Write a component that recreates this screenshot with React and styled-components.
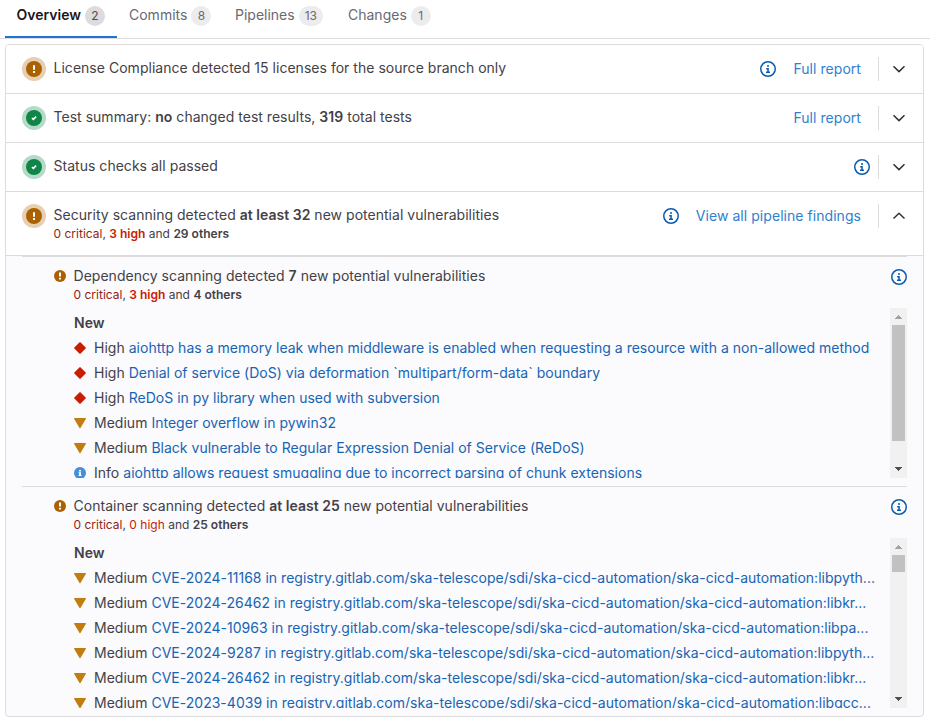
import React from "react";
import styled, { createGlobalStyle } from "styled-components";

const Global = createGlobalStyle`
  * { box-sizing: border-box; }
  body { margin: 0; background: #fff; overflow: hidden; }
`;

const Page = styled.div`
  width: 930px;
  height: 722px;
  display: flex;
  flex-direction: column;
  font-family: Inter, "Noto Sans", sans-serif;
  font-size: 14px;
  line-height: 20px;
  color: #434147;
`;

const Tabs = styled.nav`
  display: flex;
  height: 39px;
  flex: none;
  padding-left: 5px;
  border-bottom: 1px solid #dcdcde;
`;

const Tab = styled.a`
  display: flex;
  align-items: flex-start;
  gap: 4px;
  width: ${(p) => p.$width}px;
  height: 38px;
  padding: 6px 0 0 ${(p) => (p.$active ? 11.5 : 12)}px;
  white-space: nowrap;
  color: ${(p) => (p.$active ? "#18171d" : "#6a6970")};
  font-weight: ${(p) => (p.$active ? 600 : 400)};
  box-shadow: ${(p) => (p.$active ? "inset 0 -2px 0 #1f75cb" : "none")};
`;

const TabLabel = styled.span`
  margin-top: -1px;
`;

const Badge = styled.span`
  min-width: 20px;
  height: 20px;
  padding: 0 6px;
  border-radius: 10px;
  text-align: center;
  font-size: 12px;
  font-weight: 400;
  color: ${(p) => (p.$active ? "#4c4b51" : "#6a6970")};
  background: ${(p) => (p.$active ? "#dcdcde" : "#ececef")};
`;

const Panel = styled.main`
  width: 919px;
  height: 673px;
  margin: 5px 0 0 5px;
  border: 1px solid #dcdcde;
  border-radius: 4px;
  overflow: hidden;
  background: #fbfafd;
`;

const Row = styled.section`
  display: flex;
  align-items: flex-start;
  height: ${(p) => p.$height || 49}px;
  padding: 12px 12px 0 16px;
  background: #fff;
  border-bottom: 1px solid #dcdcde;
`;

const Halo = styled.span`
  display: flex;
  flex: none;
  width: 24px;
  height: 24px;
  padding: 4px;
  margin-right: 7.5px;
  border-radius: 50%;
  background: ${(p) => p.$color};
`;

const Body = styled.div`
  flex: 1;
  min-width: 0;
  white-space: nowrap;
  margin-top: ${(p) => p.$top || 0}px;
`;

const Title = styled.div`
  letter-spacing: 0.025px;
`;

const Counts = styled.div`
  margin-top: 1px;
  font-size: 12px;
  line-height: 16px;
  letter-spacing: 0.01px;
`;

const Strong = styled.strong`
  font-weight: 600;
`;

const Critical = styled.span`
  color: #951f0e;
`;

const High = styled.span`
  color: #c91c00;
  font-weight: ${(p) => (p.$bold ? 600 : 400)};
`;

const Actions = styled.div`
  display: flex;
  align-items: center;
  height: 24px;
`;

const ReportLink = styled.a`
  margin: 0 17px 0 17px;
  color: #2f80d0;
  white-space: nowrap;
  letter-spacing: 0.05px;
`;

const Toggle = styled.span`
  display: flex;
  align-items: center;
  justify-content: flex-end;
  width: 33px;
  height: 24px;
  padding-right: 4px;
  margin-left: ${(p) => p.$gap || 0}px;
  border-left: 1px solid #dcdcde;
`;

const Section = styled.section`
  display: flex;
  flex-direction: column;
  height: 230px;
  margin: 0 16px;
  border-top: 1px solid #dcdcde;
`;

const SectionHead = styled.header`
  display: flex;
  align-items: flex-start;
  height: 51px;
  padding: 9px 0 0 32px;
`;

const HeadIcon = styled.span`
  display: flex;
  margin: 4px 7.5px 0 0;
`;

const HeadInfo = styled.span`
  display: flex;
  margin-top: 3px;
`;

const Scroller = styled.div`
  display: flex;
  height: 170px;
  overflow: hidden;
`;

const List = styled.div`
  flex: 1;
  min-width: 0;
  padding: 5px 0 0 52px;
`;

const ListTitle = styled.div`
  height: 22px;
  font-weight: 600;
`;

const Finding = styled.div`
  display: flex;
  align-items: center;
  height: 25px;
  white-space: pre;
  letter-spacing: 0.018px;

  svg {
    flex: none;
    margin-right: 8px;
  }
`;

const FindingLink = styled.a`
  color: #1864b2;
`;

const Track = styled.div`
  display: flex;
  flex-direction: column;
  align-items: center;
  width: 17px;
  height: 170px;
  background: #f1f1f1;
`;

const Thumb = styled.div`
  width: 13px;
  height: ${(p) => p.$height}px;
  margin-bottom: auto;
  background: #c1c1c1;
`;

const AlertIcon = () => (
  <svg width="16" height="16" viewBox="0 0 16 16">
    <circle cx="8" cy="8" r="8" fill="#ab6100" />
    <path d="M7 4.3h2v4.5H7zM7 10h2v2H7z" fill="#fff" />
  </svg>
);

const SmallAlertIcon = () => (
  <svg width="12" height="12" viewBox="0 0 12 12">
    <circle cx="6" cy="6" r="6" fill="#ab6100" />
    <path d="M5 2.4h2v4.1H5zM5 7.7h2v1.9H5z" fill="#fff" />
  </svg>
);

const CheckIcon = () => (
  <svg width="16" height="16" viewBox="0 0 16 16">
    <circle cx="8" cy="8" r="8" fill="#108548" />
    <path d="M5.9 8.2 7.4 9.4 10.1 6.6" fill="none" stroke="#fff" strokeWidth="1.6" />
  </svg>
);

const InfoIcon = () => (
  <svg width="16" height="16" viewBox="0 0 16 16" fill="#0b5cad">
    <circle cx="8" cy="8" r="7.25" fill="none" stroke="#0b5cad" strokeWidth="1.5" />
    <circle cx="8" cy="4.9" r="1" />
    <path d="M6.2 7h2.6v3.6H10V12H6v-1.4h1.3V8.4H6.2z" />
  </svg>
);

const Chevron = ({ up }) => (
  <svg width="16" height="16" viewBox="0 0 16 16">
    <path d={up ? "M2.5 10.5 8 5.2l5.5 5.3" : "M2.5 5.3 8 10.6l5.5-5.3"} fill="none" stroke="#333238" strokeWidth="1.5" strokeLinejoin="round" />
  </svg>
);

const SeverityIcon = ({ level }) => (
  <svg width="12" height="12" viewBox="0 0 12 12">
    {level === "High" && <path d="M5.4.4a.85.85 0 0 1 1.2 0l5 5a.85.85 0 0 1 0 1.2l-5 5a.85.85 0 0 1-1.2 0l-5-5a.85.85 0 0 1 0-1.2z" fill="#c91c00" />}
    {level === "Medium" && <path d="M.8 1h10.4a.7.7 0 0 1 .6 1.1L6.6 10.7a.7.7 0 0 1-1.2 0L.2 2.1A.7.7 0 0 1 .8 1z" fill="#c17d10" />}
    {level === "Info" && (
      <>
        <circle cx="6" cy="6" r="6" fill="#428fdc" />
        <path d="M5 3h2v1.5H5zM4.5 5.2H7v2.9h.5V9h-3v-.9H5v-2h-.5z" fill="#fff" />
      </>
    )}
  </svg>
);

const ScrollArrow = ({ down }) => (
  <svg width="17" height="17" viewBox="0 0 17 17" shapeRendering="crispEdges">
    <path d={down ? "M5 6h7v1h-1v1h-1v1H9v1H8V9H7V8H6V7H5z" : "M8 7h1v1h1v1h1v1h1v1H5v-1h1V9h1V8h1z"} fill={down ? "#505050" : "#a3a3a3"} />
  </svg>
);

const ROWS = [
  { icon: "alert", title: "License Compliance detected 15 licenses for the source branch only", info: true, link: "Full report" },
  { icon: "check", title: <>Test summary: <Strong>no</Strong> changed test results, <Strong>319</Strong> total tests</>, link: "Full report" },
  { icon: "check", title: "Status checks all passed", info: true },
  {
    icon: "alert",
    title: <>Security scanning detected <Strong>at least 32</Strong> new potential vulnerabilities</>,
    counts: <><Critical>0 critical</Critical>, <High $bold>3 high</High> and <Strong>29 others</Strong></>,
    info: true,
    link: "View all pipeline findings",
    open: true,
  },
];

const REGISTRY = "registry.gitlab.com/ska-telescope/sdi/ska-cicd-automation/ska-cicd-automation:";

const SECTIONS = [
  {
    title: <>Dependency scanning detected <Strong>7</Strong> new potential vulnerabilities</>,
    counts: <><Critical>0 critical</Critical>, <High $bold>3 high</High> and <Strong>4 others</Strong></>,
    thumb: 116,
    findings: [
      ["High", "aiohttp has a memory leak when middleware is enabled when requesting a resource with a non-allowed method"],
      ["High", "Denial of service (DoS) via deformation `multipart/form-data` boundary"],
      ["High", "ReDoS in py library when used with subversion"],
      ["Medium", "Integer overflow in pywin32"],
      ["Medium", "Black vulnerable to Regular Expression Denial of Service (ReDoS)"],
      ["Info", "aiohttp allows request smuggling due to incorrect parsing of chunk extensions"],
    ],
  },
  {
    title: <>Container scanning detected <Strong>at least 25</Strong> new potential vulnerabilities</>,
    counts: <><Critical>0 critical</Critical>, <High>0 high</High> and <Strong>25 others</Strong></>,
    thumb: 17,
    findings: [
      ["Medium", `CVE-2024-11168 in ${REGISTRY}libpyth...`],
      ["Medium", `CVE-2024-26462 in ${REGISTRY}libkr...`],
      ["Medium", `CVE-2024-10963 in ${REGISTRY}libpa...`],
      ["Medium", `CVE-2024-9287 in ${REGISTRY}libpyth...`],
      ["Medium", `CVE-2024-26462 in ${REGISTRY}libkr...`],
      ["Medium", `CVE-2023-4039 in ${REGISTRY}libgcc...`],
    ],
  },
];

const TABS = [
  { label: "Overview", count: 2, width: 112, active: true },
  { label: "Commits", count: 8, width: 106 },
  { label: "Pipelines", count: 13, width: 113 },
  { label: "Changes", count: 1, width: 106 },
];

export default function App() {
  return (
    <Page>
      <Global />
      <Tabs>
        {TABS.map((t) => (
          <Tab key={t.label} $width={t.width} $active={t.active}>
            <TabLabel>{t.label}</TabLabel>
            <Badge $active={t.active}>{t.count}</Badge>
          </Tab>
        ))}
      </Tabs>
      <Panel>
        {ROWS.map((r, i) => (
          <Row key={i} $height={r.open ? 64 : 49}>
            <Halo $color={r.icon === "alert" ? "#e6cfb2" : "#b7dac8"}>
              {r.icon === "alert" ? <AlertIcon /> : <CheckIcon />}
            </Halo>
            <Body $top={1}>
              <Title>{r.title}</Title>
              {r.counts && <Counts>{r.counts}</Counts>}
            </Body>
            <Actions>
              {r.info && <InfoIcon />}
              {r.link && <ReportLink>{r.link}</ReportLink>}
              <Toggle $gap={r.link ? 0 : 8}>
                <Chevron up={r.open} />
              </Toggle>
            </Actions>
          </Row>
        ))}
        {SECTIONS.map((s, i) => (
          <Section key={i}>
            <SectionHead>
              <HeadIcon><SmallAlertIcon /></HeadIcon>
              <Body>
                <Title>{s.title}</Title>
                <Counts>{s.counts}</Counts>
              </Body>
              <HeadInfo><InfoIcon /></HeadInfo>
            </SectionHead>
            <Scroller>
              <List>
                <ListTitle>New</ListTitle>
                {s.findings.map(([level, name], j) => (
                  <Finding key={j}>
                    <SeverityIcon level={level} />
                    {level} <FindingLink>{name}</FindingLink>
                  </Finding>
                ))}
              </List>
              <Track>
                <ScrollArrow />
                <Thumb $height={s.thumb} />
                <ScrollArrow down />
              </Track>
            </Scroller>
          </Section>
        ))}
      </Panel>
    </Page>
  );
}
